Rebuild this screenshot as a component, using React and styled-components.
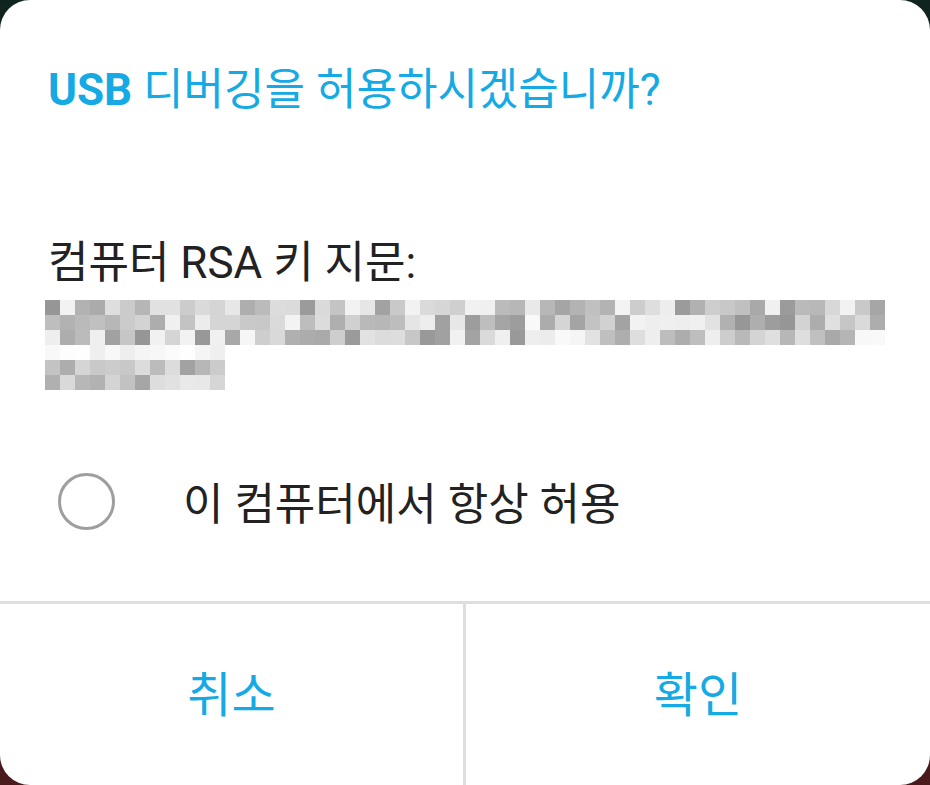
import React from 'react';
import styled, { createGlobalStyle } from 'styled-components';

const GlobalStyle = createGlobalStyle`
  html, body {
    margin: 0;
    padding: 0;
    width: 930px;
    height: 785px;
    overflow: hidden;
    background: linear-gradient(180deg, #10241f 0%, #2a1a22 55%, #4a1a1c 100%);
  }
  body {
    font-family: Roboto, "Noto Sans CJK KR", "Noto Sans", sans-serif;
  }
`;

const Dialog = styled.div`
  width: 930px;
  height: 785px;
  box-sizing: border-box;
  background: #fff;
  border-radius: 30px;
  display: flex;
  flex-direction: column;
  overflow: hidden;
`;

const Content = styled.div`
  padding: 60px 48px 0 48px;
  display: flex;
  flex-direction: column;
`;

const Title = styled.h1`
  margin: 0;
  font-size: 44px;
  line-height: 60px;
  font-weight: 400;
  color: #16aae4;

  b {
    font-weight: 700;
  }
`;

const Label = styled.p`
  margin: 118px 0 0;
  font-size: 44px;
  line-height: 50px;
  color: #222;
`;

const Fingerprint = styled.svg`
  display: block;
  margin: 12px 0 0 -3px;
`;

const OptionRow = styled.label`
  margin-top: 71px;
  height: 80px;
  display: flex;
  align-items: center;
  gap: 68px;
  font-size: 44px;
  color: #222;
`;

const Radio = styled.span`
  width: 57px;
  height: 57px;
  box-sizing: border-box;
  border: 3px solid #9e9e9e;
  border-radius: 50%;
  margin-left: 10px;
  flex-shrink: 0;
`;

const Footer = styled.div`
  margin-top: auto;
  height: 184px;
  border-top: 3px solid #dedede;
  display: grid;
  grid-template-columns: 463px 1fr;
  box-sizing: border-box;
`;

const ActionButton = styled.button`
  border: 0;
  background: transparent;
  font-family: inherit;
  font-size: 48px;
  color: #16aae4;
  padding: 0 0 8px;
  border-left: ${(p) => (p.$divider ? '3px solid #dedede' : '0')};
  cursor: pointer;
`;

// pixelated fingerprint, seeded so it's stable
const makeCells = () => {
  let s = 7;
  const rnd = () => {
    s = (s * 16807) % 2147483647;
    return (s - 1) / 2147483646;
  };
  const cells = [];
  for (let r = 0; r < 6; r++) {
    const cols = r < 3 ? 56 : 12;
    for (let c = 0; c < cols; c++) {
      let v;
      if (r === 3) v = 236 + Math.floor(rnd() * 20);
      else if (r >= 4) v = 160 + Math.floor(rnd() * 80);
      else v = 150 + Math.floor(rnd() * 100);
      cells.push({ x: c * 15, y: r * 15, v });
    }
  }
  return cells;
};

const cells = makeCells();

const App = () => (
  <>
    <GlobalStyle />
    <Dialog>
      <Content>
        <Title>
          <b>USB</b> 디버깅을 허용하시겠습니까?
        </Title>
        <Label>컴퓨터 RSA 키 지문:</Label>
        <Fingerprint width='840' height='90' viewBox='0 0 840 90'>
          {cells.map((c, i) => (
            <rect
              key={i}
              x={c.x}
              y={c.y}
              width='15'
              height='15'
              fill={`rgb(${c.v},${c.v},${c.v})`}
            />
          ))}
        </Fingerprint>
        <OptionRow>
          <Radio />
          이 컴퓨터에서 항상 허용
        </OptionRow>
      </Content>
      <Footer>
        <ActionButton>취소</ActionButton>
        <ActionButton $divider>확인</ActionButton>
      </Footer>
    </Dialog>
  </>
);

export default App;
